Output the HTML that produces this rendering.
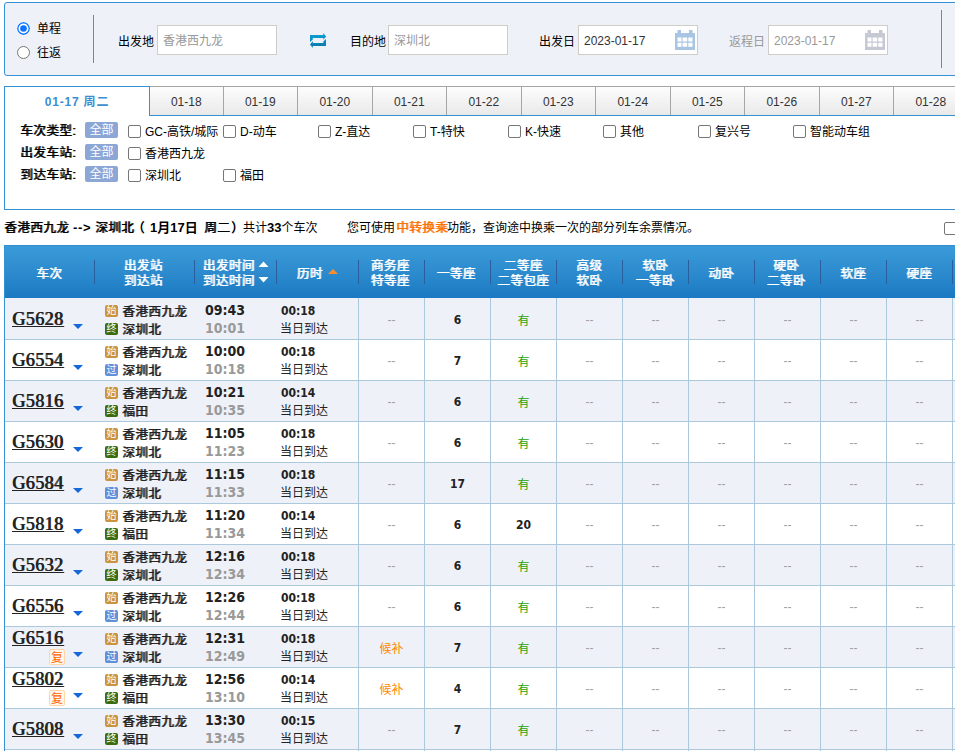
<!DOCTYPE html>
<html lang="zh-CN">
<head>
<meta charset="utf-8">
<title>车票预订</title>
<style>
*{margin:0;padding:0;box-sizing:border-box;}
html,body{width:955px;height:751px;overflow:hidden;background:#fff;}
body{font-family:"Liberation Sans","Noto Sans CJK SC",sans-serif;font-size:12px;color:#000;position:relative;}
ul{list-style:none;}
i{font-style:normal;}
.abs{position:absolute;}

/* search box */
.sear{position:absolute;left:4px;top:2px;width:1000px;height:74px;border:1px solid #3591d3;border-radius:3px 0 0 3px;background:#eef1f8;}
.sear .vl{position:absolute;width:1px;background:#3a9ad9;}
.rad{position:absolute;left:12px;width:13px;height:13px;border-radius:50%;border:1px solid #767676;background:#fff;}
.rad.on{border:none;background:none;}
.lab{position:absolute;font-size:12px;line-height:16px;white-space:nowrap;}
.inp{position:absolute;top:22px;width:120px;height:30px;border:1px solid #cfcdc7;background:#fff;font-size:12px;line-height:30px;padding-left:5px;color:#999;white-space:nowrap;}
.inp.dk{color:#333;}

/* date tabs */
.tabs{position:absolute;left:4px;top:86px;height:30px;width:1000px;border-bottom:1px solid #3591d3;}
.tabs ul{position:absolute;left:145px;top:0;white-space:nowrap;height:29px;display:flex;}
.tabs li{width:74.5px;height:29px;border:1px solid #a6a6a6;border-left:none;border-bottom:none;background:linear-gradient(#fdfdfd,#e9e9e9);text-align:center;line-height:31px;font-size:12px;color:#333;flex:none;}
.tabs li:first-child{border-left:1px solid #a6a6a6;}
.tabs .act:after{content:"";position:absolute;left:0;right:0;bottom:-1px;height:1px;background:#fff;}
.tabs .act{position:absolute;left:0;top:0;width:146px;height:30px;background:#fff;border:1px solid #3591d3;border-bottom:none;text-align:center;line-height:31px;font-weight:bold;color:#3a8ed1;font-size:12px;letter-spacing:0.8px;z-index:2;}

/* filter */
.filt{position:absolute;left:4px;top:116px;width:1000px;height:94px;border:1px solid #3591d3;border-top:none;background:#fff;}
.frow{position:absolute;left:0;height:22px;width:100%;}
.frow .t{position:absolute;left:15px;top:0;line-height:22px;font-weight:normal;text-shadow:1px 0 0 #000;font-size:12.500px;letter-spacing:0.5px;}
.frow .all{position:absolute;left:80px;top:2px;width:33px;height:16px;background:#8ca6d6;color:#fff;border-radius:2px;text-align:center;line-height:16px;font-size:12px;}
.ck{position:absolute;top:5px;width:13px;height:13px;border:1px solid #767676;border-radius:2px;background:#fff;}
.ckt{position:absolute;top:1px;line-height:22px;font-size:12px;white-space:nowrap;}

/* summary */
.sum{position:absolute;left:4px;top:218px;line-height:20px;font-size:12px;white-space:nowrap;width:940px;height:20px;}
.sum>*{position:absolute;top:0;white-space:nowrap;}
.sum b.n{font-size:13px;}
.sum b{font-size:13px;}
.sum b.f{font-weight:normal;text-shadow:1px 0 0 currentColor;font-size:12.500px;letter-spacing:0.5px;}
.sum b.o{color:#fb7403;}

/* table */
.tl{position:absolute;left:4px;top:245px;width:1000px;border-left:1px solid #3591d3;}
table{border-collapse:separate;border-spacing:0;table-layout:fixed;width:1013px;}
thead th{height:53px;background:linear-gradient(#2f8fd2 0,#2f8fd2 1px,#3b9bd9 1px,#2d8bce 50%,#1b79c2);color:#fff;font-weight:normal;text-shadow:1px 0 0 #fff;font-size:12.500px;letter-spacing:0.5px;line-height:15px;position:relative;text-align:center;vertical-align:middle;padding-top:4px;padding-right:2px;}
thead th .sp{position:absolute;left:-1px;top:15px;width:2px;height:24px;border-left:1px solid #2a5e9e;}
thead th .sp.s0{left:0;}
thead th.r{padding-right:0;}
thead th .one{position:relative;top:1px;}
tbody td{height:41px;border-bottom:1px solid #abc8dc;vertical-align:middle;font-size:12px;}
tr.odd td{background:#eef1f8;}
tbody tr:first-child td{height:42px;padding-top:1px;}
tbody tr:first-child a.no{top:10px;}
tbody tr:first-child .tri{top:26px;}
tr.even td{background:#fff;}
td.s{border-left:1px solid #abc8dc;text-align:center;}
td.c1{position:relative;}
a.no{position:absolute;left:7px;top:9px;font-family:"Liberation Serif",serif;font-weight:normal;text-shadow:0.9px 0 0 #222;font-size:18px;line-height:22px;color:#222;text-decoration:underline;text-decoration-thickness:1px;letter-spacing:0.45px;}
.fx a.no{top:0px;}
.tri{position:absolute;left:68px;top:25px;width:0;height:0;border-left:5px solid transparent;border-right:5px solid transparent;border-top:5px solid #1467d9;}
.fx .tri{top:25px;}
.fu{position:absolute;left:44px;top:22px;width:16px;height:16px;border:1px solid #ffd6a6;background:#fff7ec;color:#f60;font-size:12px;line-height:16px;text-align:center;border-radius:2px;}
td.c2{padding-left:10px;}
td.c2 div{height:18px;line-height:18px;white-space:nowrap;}
td.c2 strong{font-size:12.500px;letter-spacing:0.5px;font-weight:normal;text-shadow:1px 0 0 #222;color:#222;vertical-align:middle;position:relative;}
td.c2 strong{top:1px;}
.ic{display:inline-block;width:13px;height:12px;border-radius:2px;color:#fff;font-size:10px;line-height:12px;text-align:center;vertical-align:middle;margin-right:4px;overflow:hidden;}
.is{background:#c9933f;}
.iz{background:#3b6c10;}
.ig{background:#5f90da;}
td.c3{padding-left:10px;}
.t1,.t2{font-family:"DejaVu Sans Condensed","DejaVu Sans","Liberation Sans",sans-serif;font-weight:bold;font-size:14px;line-height:18px;height:18px;color:#222;}
.t2{color:#999;}
td.c4{padding-left:4px;}
.d1{font-family:"DejaVu Sans Condensed","DejaVu Sans","Liberation Sans",sans-serif;font-weight:bold;font-size:12px;line-height:18px;height:18px;color:#222;position:relative;top:1px;}
.d2{font-size:12px;line-height:18px;height:18px;color:#222;position:relative;top:1px;left:-1px;}
.no{color:#888;}
span.no{color:#a0a0a0;font-size:12px;position:relative;top:1px;}
.yes{color:#26a306;}
.hb{color:#ff8800;}
.num{font-family:"DejaVu Sans Condensed","DejaVu Sans","Liberation Sans",sans-serif;color:#222;font-weight:bold;position:relative;top:1px;}
</style>
</head>
<body>

<div class="sear">
  <svg class="rad on" style="top:19px" viewBox="0 0 13 13"><circle cx="6.500" cy="6.500" r="5.750" fill="#fff" stroke="#0a74ff" stroke-width="1.400"/><circle cx="6.500" cy="6.500" r="3.300" fill="#0a74ff"/></svg><span class="lab" style="left:32px;top:18px">单程</span>
  <i class="rad" style="top:43px"></i><span class="lab" style="left:32px;top:42px">往返</span>
  <i class="vl" style="left:88px;top:12px;height:48px"></i>
  <span class="lab" style="left:113px;top:31px">出发地</span>
  <div class="inp" style="left:152px">香港西九龙</div>
  <svg class="abs" style="left:304px;top:29px" width="19" height="17" viewBox="0 0 19 17"><defs><linearGradient id="sg" x1="0" y1="0" x2="0" y2="1"><stop offset="0" stop-color="#0aa2da"/><stop offset="1" stop-color="#0b78aa"/></linearGradient></defs><path d="M1 3L14.300 3L14.300 1L17.200 4.400L14.300 7.800L14.300 6L3.800 6L3.800 7.500L1 10Z M17 14L3.800 14L3.800 16L1 12.500L3.800 9L3.800 11L14.300 11L14.300 9.500L17 7Z" fill="url(#sg)"/></svg>
  <span class="lab" style="left:345px;top:31px">目的地</span>
  <div class="inp" style="left:383px">深圳北</div>
  <span class="lab" style="left:534px;top:31px">出发日</span>
  <div class="inp dk" style="left:573px">2023-01-17</div>
  <svg class="abs" style="left:670px;top:27px" width="20" height="20" viewBox="0 0 20 20"><path d="M0 3h20v17H0z M2.500 0h3.500v3h-3.500z M14 0h3.500v3h-3.500z" fill="#a8c6e3"/><path d="M2.500 7.500h4v4h-4zM7.600 7.500h4.600v4h-4.600zM13.300 7.500h4.200v4h-4.200zM2.500 12.800h4v4h-4zM7.600 12.800h4.600v4h-4.600zM13.300 12.800h4.200v4h-4.200z" fill="#fff"/></svg>
  <span class="lab" style="left:724px;top:31px;color:#999">返程日</span>
  <div class="inp" style="left:763px">2023-01-17</div>
  <svg class="abs" style="left:860px;top:27px" width="20" height="20" viewBox="0 0 20 20"><path d="M0 3h20v17H0z M2.500 0h3.500v3h-3.500z M14 0h3.500v3h-3.500z" fill="#c5c9d3"/><path d="M2.500 7.500h4v4h-4zM7.600 7.500h4.600v4h-4.600zM13.300 7.500h4.200v4h-4.200zM2.500 12.800h4v4h-4zM7.600 12.800h4.600v4h-4.600zM13.300 12.800h4.200v4h-4.200z" fill="#fff"/></svg>
  <i class="vl" style="left:936px;top:7px;height:58px"></i>
</div>

<div class="tabs">
  <div class="act">01-17 周二</div>
  <ul><li>01-18</li><li>01-19</li><li>01-20</li><li>01-21</li><li>01-22</li><li>01-23</li><li>01-24</li><li>01-25</li><li>01-26</li><li>01-27</li><li>01-28</li><li>01-29</li></ul>
</div>

<div class="filt">
  <div class="frow" style="top:4px">
    <span class="t">车次类型:</span><span class="all">全部</span>
    <i class="ck" style="left:123px"></i><span class="ckt" style="left:140px">GC-高铁/城际</span>
    <i class="ck" style="left:218px"></i><span class="ckt" style="left:235px">D-动车</span>
    <i class="ck" style="left:313px"></i><span class="ckt" style="left:330px">Z-直达</span>
    <i class="ck" style="left:408px"></i><span class="ckt" style="left:425px">T-特快</span>
    <i class="ck" style="left:503px"></i><span class="ckt" style="left:520px">K-快速</span>
    <i class="ck" style="left:598px"></i><span class="ckt" style="left:615px">其他</span>
    <i class="ck" style="left:693px"></i><span class="ckt" style="left:710px">复兴号</span>
    <i class="ck" style="left:788px"></i><span class="ckt" style="left:805px">智能动车组</span>
  </div>
  <div class="frow" style="top:26px">
    <span class="t">出发车站:</span><span class="all">全部</span>
    <i class="ck" style="left:123px"></i><span class="ckt" style="left:140px">香港西九龙</span>
  </div>
  <div class="frow" style="top:48px">
    <span class="t">到达车站:</span><span class="all">全部</span>
    <i class="ck" style="left:123px"></i><span class="ckt" style="left:140px">深圳北</span>
    <i class="ck" style="left:218px"></i><span class="ckt" style="left:235px">福田</span>
  </div>
</div>

<div class="sum"><b class="f" style="left:0">香港西九龙</b><b style="left:69px;letter-spacing:0.7px">--&gt;</b><b class="f" style="left:91px">深圳北</b><b style="left:128px">（</b><b style="left:146px">1月17日</b><b class="f" style="left:200px">周二</b><b style="left:227px">）</b><span style="left:239px">共计<b class="n">33</b>个车次</span><span style="left:343px">您可使用</span><b class="o f" style="left:392px">中转换乘</b><span style="left:443px">功能，查询途中换乘一次的部分列车余票情况。</span></div>
<i class="ck" style="left:944px;top:222px;position:absolute"></i>

<div class="tl">
<table>
<colgroup><col style="width:90px"><col style="width:100px"><col style="width:82px"><col style="width:81px"><col style="width:66px"><col style="width:66px"><col style="width:66px"><col style="width:66px"><col style="width:66px"><col style="width:66px"><col style="width:66px"><col style="width:66px"><col style="width:66px"><col style="width:66px"></colgroup>
<thead><tr>
<th><span class="one">车次</span></th>
<th style="padding-right:4px"><i class="sp"></i>出发站<br>到达站</th>
<th><i class="sp"></i><span style="position:relative;left:-6.500px;display:inline-block">出发时间<br>到达时间</span><svg class="abs" style="left:63px;top:16px" width="11" height="22" viewBox="0 0 11 22"><path d="M0.500 6L5.500 0.500 10.500 6zM0.500 16L5.500 21.500 10.500 16z" fill="#fff"/></svg></th>
<th><i class="sp"></i><span style="position:relative;left:-7px;top:1px">历时</span><svg class="abs" style="left:51px;top:24px" width="10" height="5" viewBox="0 0 10 5"><path d="M0 5L5 0 10 5z" fill="#fb8d2e"/></svg></th>
<th><i class="sp s0"></i>商务座<br>特等座</th>
<th><i class="sp s0"></i><span class="one">一等座</span></th>
<th class="r"><i class="sp s0"></i>二等座<br>二等包座</th>
<th class="r"><i class="sp s0"></i>高级<br>软卧</th>
<th class="r"><i class="sp s0"></i>软卧<br>一等卧</th>
<th class="r"><i class="sp s0"></i><span class="one">动卧</span></th>
<th><i class="sp s0"></i>硬卧<br>二等卧</th>
<th class="r"><i class="sp s0"></i><span class="one">软座</span></th>
<th class="r"><i class="sp s0"></i><span class="one">硬座</span></th>
<th class="r"><i class="sp s0"></i><span class="one">无座</span></th>
</tr></thead>
<tbody>
<tr class="odd"><td class="c1"><a class="no">G5628</a><i class="tri"></i></td><td class="c2"><div><i class="ic is">始</i><strong>香港西九龙</strong></div><div><i class="ic iz">终</i><strong>深圳北</strong></div></td><td class="c3"><div class="t1">09:43</div><div class="t2">10:01</div></td><td class="c4"><div class="d1">00:18</div><div class="d2">当日到达</div></td><td class="s"><span class="no">--</span></td><td class="s"><b class="num">6</b></td><td class="s"><span class="yes">有</span></td><td class="s"><span class="no">--</span></td><td class="s"><span class="no">--</span></td><td class="s"><span class="no">--</span></td><td class="s"><span class="no">--</span></td><td class="s"><span class="no">--</span></td><td class="s"><span class="no">--</span></td><td class="s"></td></tr>
<tr class="even"><td class="c1"><a class="no">G6554</a><i class="tri"></i></td><td class="c2"><div><i class="ic is">始</i><strong>香港西九龙</strong></div><div><i class="ic ig">过</i><strong>深圳北</strong></div></td><td class="c3"><div class="t1">10:00</div><div class="t2">10:18</div></td><td class="c4"><div class="d1">00:18</div><div class="d2">当日到达</div></td><td class="s"><span class="no">--</span></td><td class="s"><b class="num">7</b></td><td class="s"><span class="yes">有</span></td><td class="s"><span class="no">--</span></td><td class="s"><span class="no">--</span></td><td class="s"><span class="no">--</span></td><td class="s"><span class="no">--</span></td><td class="s"><span class="no">--</span></td><td class="s"><span class="no">--</span></td><td class="s"></td></tr>
<tr class="odd"><td class="c1"><a class="no">G5816</a><i class="tri"></i></td><td class="c2"><div><i class="ic is">始</i><strong>香港西九龙</strong></div><div><i class="ic iz">终</i><strong>福田</strong></div></td><td class="c3"><div class="t1">10:21</div><div class="t2">10:35</div></td><td class="c4"><div class="d1">00:14</div><div class="d2">当日到达</div></td><td class="s"><span class="no">--</span></td><td class="s"><b class="num">6</b></td><td class="s"><span class="yes">有</span></td><td class="s"><span class="no">--</span></td><td class="s"><span class="no">--</span></td><td class="s"><span class="no">--</span></td><td class="s"><span class="no">--</span></td><td class="s"><span class="no">--</span></td><td class="s"><span class="no">--</span></td><td class="s"></td></tr>
<tr class="even"><td class="c1"><a class="no">G5630</a><i class="tri"></i></td><td class="c2"><div><i class="ic is">始</i><strong>香港西九龙</strong></div><div><i class="ic iz">终</i><strong>深圳北</strong></div></td><td class="c3"><div class="t1">11:05</div><div class="t2">11:23</div></td><td class="c4"><div class="d1">00:18</div><div class="d2">当日到达</div></td><td class="s"><span class="no">--</span></td><td class="s"><b class="num">6</b></td><td class="s"><span class="yes">有</span></td><td class="s"><span class="no">--</span></td><td class="s"><span class="no">--</span></td><td class="s"><span class="no">--</span></td><td class="s"><span class="no">--</span></td><td class="s"><span class="no">--</span></td><td class="s"><span class="no">--</span></td><td class="s"></td></tr>
<tr class="odd"><td class="c1"><a class="no">G6584</a><i class="tri"></i></td><td class="c2"><div><i class="ic is">始</i><strong>香港西九龙</strong></div><div><i class="ic ig">过</i><strong>深圳北</strong></div></td><td class="c3"><div class="t1">11:15</div><div class="t2">11:33</div></td><td class="c4"><div class="d1">00:18</div><div class="d2">当日到达</div></td><td class="s"><span class="no">--</span></td><td class="s"><b class="num">17</b></td><td class="s"><span class="yes">有</span></td><td class="s"><span class="no">--</span></td><td class="s"><span class="no">--</span></td><td class="s"><span class="no">--</span></td><td class="s"><span class="no">--</span></td><td class="s"><span class="no">--</span></td><td class="s"><span class="no">--</span></td><td class="s"></td></tr>
<tr class="even"><td class="c1"><a class="no">G5818</a><i class="tri"></i></td><td class="c2"><div><i class="ic is">始</i><strong>香港西九龙</strong></div><div><i class="ic iz">终</i><strong>福田</strong></div></td><td class="c3"><div class="t1">11:20</div><div class="t2">11:34</div></td><td class="c4"><div class="d1">00:14</div><div class="d2">当日到达</div></td><td class="s"><span class="no">--</span></td><td class="s"><b class="num">6</b></td><td class="s"><b class="num">20</b></td><td class="s"><span class="no">--</span></td><td class="s"><span class="no">--</span></td><td class="s"><span class="no">--</span></td><td class="s"><span class="no">--</span></td><td class="s"><span class="no">--</span></td><td class="s"><span class="no">--</span></td><td class="s"></td></tr>
<tr class="odd"><td class="c1"><a class="no">G5632</a><i class="tri"></i></td><td class="c2"><div><i class="ic is">始</i><strong>香港西九龙</strong></div><div><i class="ic iz">终</i><strong>深圳北</strong></div></td><td class="c3"><div class="t1">12:16</div><div class="t2">12:34</div></td><td class="c4"><div class="d1">00:18</div><div class="d2">当日到达</div></td><td class="s"><span class="no">--</span></td><td class="s"><b class="num">6</b></td><td class="s"><span class="yes">有</span></td><td class="s"><span class="no">--</span></td><td class="s"><span class="no">--</span></td><td class="s"><span class="no">--</span></td><td class="s"><span class="no">--</span></td><td class="s"><span class="no">--</span></td><td class="s"><span class="no">--</span></td><td class="s"></td></tr>
<tr class="even"><td class="c1"><a class="no">G6556</a><i class="tri"></i></td><td class="c2"><div><i class="ic is">始</i><strong>香港西九龙</strong></div><div><i class="ic ig">过</i><strong>深圳北</strong></div></td><td class="c3"><div class="t1">12:26</div><div class="t2">12:44</div></td><td class="c4"><div class="d1">00:18</div><div class="d2">当日到达</div></td><td class="s"><span class="no">--</span></td><td class="s"><b class="num">6</b></td><td class="s"><span class="yes">有</span></td><td class="s"><span class="no">--</span></td><td class="s"><span class="no">--</span></td><td class="s"><span class="no">--</span></td><td class="s"><span class="no">--</span></td><td class="s"><span class="no">--</span></td><td class="s"><span class="no">--</span></td><td class="s"></td></tr>
<tr class="odd"><td class="c1 fx"><a class="no">G6516</a><span class="fu">复</span><i class="tri"></i></td><td class="c2"><div><i class="ic is">始</i><strong>香港西九龙</strong></div><div><i class="ic ig">过</i><strong>深圳北</strong></div></td><td class="c3"><div class="t1">12:31</div><div class="t2">12:49</div></td><td class="c4"><div class="d1">00:18</div><div class="d2">当日到达</div></td><td class="s"><span class="hb">候补</span></td><td class="s"><b class="num">7</b></td><td class="s"><span class="yes">有</span></td><td class="s"><span class="no">--</span></td><td class="s"><span class="no">--</span></td><td class="s"><span class="no">--</span></td><td class="s"><span class="no">--</span></td><td class="s"><span class="no">--</span></td><td class="s"><span class="no">--</span></td><td class="s"></td></tr>
<tr class="even"><td class="c1 fx"><a class="no">G5802</a><span class="fu">复</span><i class="tri"></i></td><td class="c2"><div><i class="ic is">始</i><strong>香港西九龙</strong></div><div><i class="ic iz">终</i><strong>福田</strong></div></td><td class="c3"><div class="t1">12:56</div><div class="t2">13:10</div></td><td class="c4"><div class="d1">00:14</div><div class="d2">当日到达</div></td><td class="s"><span class="hb">候补</span></td><td class="s"><b class="num">4</b></td><td class="s"><span class="yes">有</span></td><td class="s"><span class="no">--</span></td><td class="s"><span class="no">--</span></td><td class="s"><span class="no">--</span></td><td class="s"><span class="no">--</span></td><td class="s"><span class="no">--</span></td><td class="s"><span class="no">--</span></td><td class="s"></td></tr>
<tr class="odd"><td class="c1"><a class="no">G5808</a><i class="tri"></i></td><td class="c2"><div><i class="ic is">始</i><strong>香港西九龙</strong></div><div><i class="ic iz">终</i><strong>福田</strong></div></td><td class="c3"><div class="t1">13:30</div><div class="t2">13:45</div></td><td class="c4"><div class="d1">00:15</div><div class="d2">当日到达</div></td><td class="s"><span class="no">--</span></td><td class="s"><b class="num">7</b></td><td class="s"><span class="yes">有</span></td><td class="s"><span class="no">--</span></td><td class="s"><span class="no">--</span></td><td class="s"><span class="no">--</span></td><td class="s"><span class="no">--</span></td><td class="s"><span class="no">--</span></td><td class="s"><span class="no">--</span></td><td class="s"></td></tr>
<tr class="even"><td class="c1"><a class="no">G5634</a><i class="tri"></i></td><td class="c2"><div><i class="ic is">始</i><strong>香港西九龙</strong></div><div><i class="ic iz">终</i><strong>深圳北</strong></div></td><td class="c3"><div class="t1">13:50</div><div class="t2">14:08</div></td><td class="c4"><div class="d1">00:18</div><div class="d2">当日到达</div></td><td class="s"><span class="no">--</span></td><td class="s"><b class="num">6</b></td><td class="s"><span class="yes">有</span></td><td class="s"><span class="no">--</span></td><td class="s"><span class="no">--</span></td><td class="s"><span class="no">--</span></td><td class="s"><span class="no">--</span></td><td class="s"><span class="no">--</span></td><td class="s"><span class="no">--</span></td><td class="s"></td></tr>
</tbody>
</table>
</div>

</body>
</html>
